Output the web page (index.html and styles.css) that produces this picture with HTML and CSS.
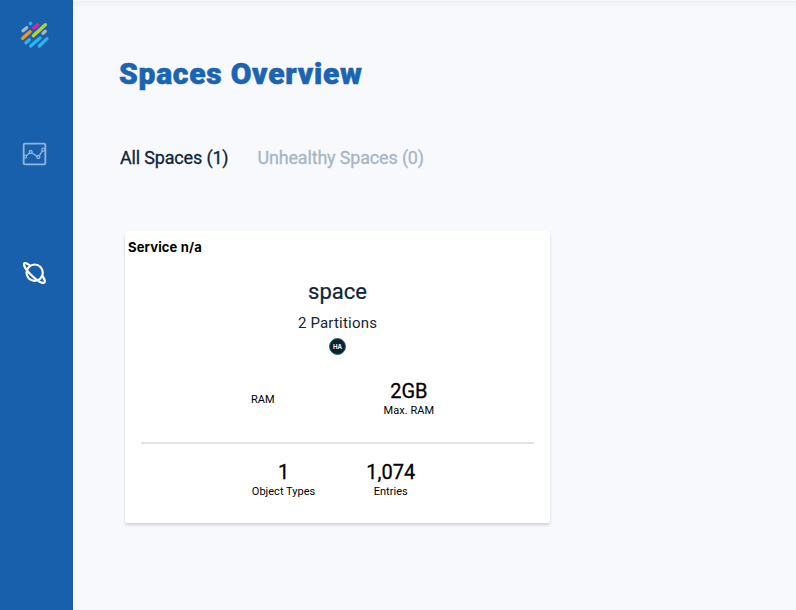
FILE: index.html
```html
<!DOCTYPE html>
<html lang="en">
<head>
<meta charset="utf-8">
<title>Spaces Overview</title>
<link rel="stylesheet" href="styles.css">
</head>
<body>
<nav class="sidebar">
  <svg class="logo" viewBox="0 0 126 126" fill="none" stroke-width="10" stroke-linecap="round">
    <path stroke="#2bb3f3" d="M49 29l1-1M36 86l10-9M50 96l28-24M76 96l23-22"/>
    <path stroke="#e5219b" d="M59 42l12-10"/>
    <path stroke="#a9b5c0" d="M27 50l11-9M87 58l7-6"/>
    <path stroke="#b5d433" d="M58 65l36-33"/>
    <path stroke="#f7931e" d="M26 73l22-20"/>
  </svg>
  <svg class="chart" viewBox="0 0 126 126" fill="none" stroke="#8fb4dd" stroke-width="4">
    <rect x="29" y="29" width="65" height="62" rx="4" stroke-width="5.500"/>
    <path d="M36 66l11-9M54 57l16 11M76 65l10-15"/>
    <circle cx="33" cy="68" r="4.500"/><circle cx="50" cy="54" r="4.500"/><circle cx="73" cy="69" r="4.500"/><circle cx="88" cy="47" r="4.500"/>
  </svg>
  <svg class="planet" viewBox="0 0 126 126" fill="none" stroke="#fff" stroke-width="6.500">
    <circle cx="62" cy="62" r="24.500"/>
    <path stroke-linecap="round" d="M46 39C34 30 27 32 31 42C37 57 67 87 83 92C95 95 96 86 85 72"/>
  </svg>
</nav>
<main class="content">
  <h1>Spaces Overview</h1>
  <div class="tabs"><span class="tab active">All Spaces (1)</span><span class="tab">Unhealthy Spaces (0)</span></div>
  <section class="card">
    <div class="service">Service n/a</div>
    <div class="name">space</div>
    <div class="partitions">2 Partitions</div>
    <div class="badge"><span>HA</span></div>
    <div class="memory">
      <div class="stat ram"><span>RAM</span></div>
      <div class="stat"><b>2GB</b><span>Max. RAM</span></div>
    </div>
    <div class="rule"></div>
    <div class="counts">
      <div class="stat"><b>1</b><span>Object Types</span></div>
      <div class="stat"><b>1,074</b><span>Entries</span></div>
    </div>
  </section>
</main>
</body>
</html>
```
FILE: styles.css
```css
* { box-sizing: border-box; }
body {
  margin: 0;
  height: 610px;
  display: flex;
  overflow: hidden;
  background: #f8f9fd;
  font-family: Roboto, sans-serif;
  color: #000;
}
.sidebar {
  width: 73px;
  padding: 14px 0 0 14px;
  background: #1960ac;
  display: flex;
  flex-direction: column;
}
.sidebar svg { width: 42px; height: 42px; flex: none; }
.chart { margin-top: 78px; }
.planet { margin-top: 76px; }
.content {
  flex: 1;
  padding: 56px 0 0 47px;
  background: linear-gradient(#f8f9fd 0 1px, #eef0f5 1px, #f8f9fd 8px);
}
h1 {
  margin: 0 0 0 -1px;
  font-size: 30px;
  line-height: 36px;
  font-weight: 900;
  letter-spacing: 0.75px;
  color: #1a64b2;
  -webkit-text-stroke: 0.6px;
  white-space: nowrap;
}
.tabs {
  display: flex;
  gap: 29px;
  margin-top: 54px;
  font-size: 18px;
  line-height: 24px;
  letter-spacing: -0.17px;
}
.tab { color: #a6b6c4; -webkit-text-stroke: 0.3px; }
.tab.active { color: #10243a; }
.card {
  width: 425px;
  height: 292px;
  margin: 61px 0 0 5px;
  padding-top: 8px;
  background: #fff;
  border-radius: 4px 4px 2px 2px;
  box-shadow: 0 2px 3px rgba(0, 0, 0, 0.16);
  display: flex;
  flex-direction: column;
  align-items: center;
}
.service {
  align-self: flex-start;
  margin-left: 3px;
  font: 700 13px/16px Inter, sans-serif;
  letter-spacing: 0.15px;
}
.name {
  margin-top: 23px;
  font-size: 22px;
  line-height: 28px;
  color: #10243a;
  -webkit-text-stroke: 0.2px;
}
.partitions {
  margin-top: 7px;
  font-size: 15px;
  line-height: 20px;
  letter-spacing: 0.2px;
  color: #10243a;
}
.badge {
  width: 17px;
  height: 17px;
  margin-top: 5px;
  border: 1px solid #38646c;
  border-radius: 50%;
  background: #0b2233;
  color: #fff;
  display: flex;
  align-items: center;
  justify-content: center;
  font: 700 6px/8px Inter, sans-serif;
}
.memory { display: flex; gap: 109px; margin-top: 24px; margin-left: 10px; height: 40px; }
.stat { display: flex; flex-direction: column; align-items: center; }
.stat b { font-weight: 400; font-size: 20px; line-height: 24px; -webkit-text-stroke: 0.3px; }
.stat span { margin-top: 1px; font-size: 11px; line-height: 14px; letter-spacing: 0.03px; }
.ram { padding-top: 13px; }
.rule { width: 393px; height: 2px; margin-top: 23px; background: #e3e3e3; }
.counts { display: flex; gap: 51px; margin-top: 16px; margin-right: 8px; }
```
